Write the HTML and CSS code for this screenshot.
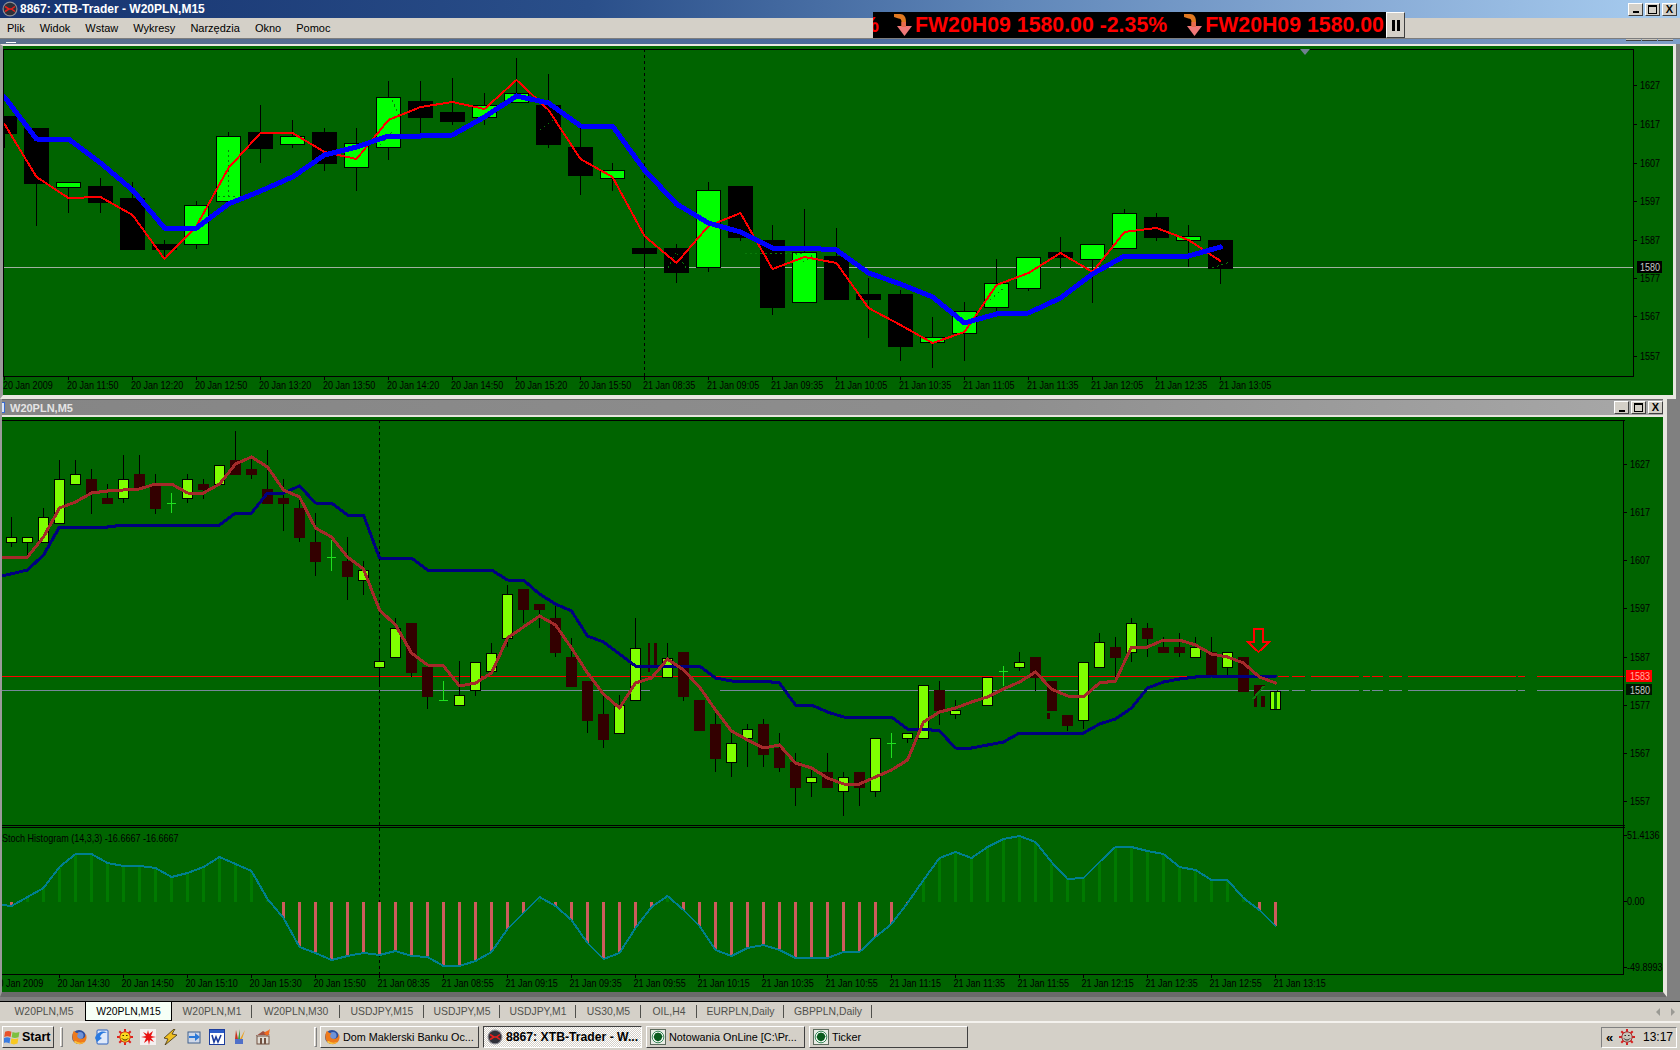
FILE: index.html
```html
<!DOCTYPE html>
<html lang="pl">
<head>
<meta charset="utf-8">
<title>8867: XTB-Trader - W20PLN,M15</title>
<link rel="stylesheet" href="styles.css">
</head>
<body>
<svg class="defs" width="0" height="0" aria-hidden="true">
  <symbol id="i-mt" viewBox="0 0 16 16">
    <circle cx="8" cy="8" r="7.5" fill="#8e8e96"/>
    <circle cx="8" cy="8" r="6.3" fill="#2f3038"/>
    <path d="M3 5.5 7 8 3 10.5M13 5.5 9.5 8 13 10.5M6 8h4" fill="none" stroke="#e8201c" stroke-width="1.5"/>
  </symbol>
  <symbol id="i-ff" viewBox="0 0 16 16">
    <circle cx="8" cy="8" r="7" fill="#2c4f9e"/>
    <circle cx="9" cy="6.5" r="3.5" fill="#6f93d8"/>
    <path d="M3 1.5C1 5 .5 10 3.5 13c3 3 8 2.8 10.5-.2 2-2.5 2-5.8.6-8.3.1 2.5-1 4.3-2.6 5-2 1-4.6.4-5.6-1.5C5.900 6.700 6.600 5 7.500 4.200 5.400 4.300 4.300 3.500 3 1.500Z" fill="#ee7a1c"/>
    <path d="M3 13c3 2.800 8 2.700 10.800-.2-2.300 1-6.300 1.300-8.300-.3-1-.8-2.200-.2-2.500.5Z" fill="#f8c23c"/>
  </symbol>
  <symbol id="i-green" viewBox="0 0 16 16">
    <rect x=".5" y=".5" width="15" height="15" fill="#e8ece4" stroke="#5c6a5c"/>
    <circle cx="8" cy="8" r="5.800" fill="#fff" stroke="#3a8a5a"/>
    <path d="M5 4.500 8 3.500l3 1 1.500 3-1.500 3.500-3 1.500-3-1.500L3.500 8Z" fill="#0a5c1e"/>
  </symbol>
  <symbol id="i-sun" viewBox="0 0 16 16">
    <path d="M8 0v16M0 8h16M2.300 2.300l11.400 11.400M13.700 2.300 2.300 13.700" stroke="#e02020" stroke-width="2"/>
    <circle cx="8" cy="8" r="5.200" fill="#f8d820" stroke="#d04010"/>
    <path d="M5.500 6.500h1.400M9.100 6.500h1.400" stroke="#302000" stroke-width="1.200"/>
    <path d="M5 9.500c1.500 2 4.500 2 6 0" fill="none" stroke="#302000"/>
  </symbol>
  <symbol id="i-sun-gray" viewBox="0 0 16 16">
    <path d="M8 0v16M0 8h16M2.300 2.300l11.400 11.400M13.700 2.300 2.300 13.700" stroke="#d82020" stroke-width="2"/>
    <circle cx="8" cy="8" r="5.200" fill="#c8c4b8" stroke="#a03030"/>
    <path d="M5.500 6.500h1.400M9.100 6.500h1.400" stroke="#202020" stroke-width="1.200"/>
    <path d="M5 9.500c1.500 2 4.500 2 6 0" fill="none" stroke="#202020"/>
  </symbol>
  <symbol id="i-arrow" viewBox="0 0 19 24">
    <path d="M1 1h6c4 0 6 3 6 8v4H8.500V9c0-2.500-1-3.500-3-3.500L1 4Z" fill="#e07820"/>
    <path d="M4 13h15l-7.500 10Z" fill="#f07878"/>
    <path d="M8.500 9h4.500v5H8.500Z" fill="#e86a4a"/>
  </symbol>
</svg>

<header class="titlebar">
  <svg class="icon16"><use href="#i-mt"/></svg>
  <span class="title-text">8867: XTB-Trader - W20PLN,M15</span>
  <div class="winbtns">
    <button class="winbtn"><span class="g-min"></span></button>
    <button class="winbtn"><span class="g-max"></span></button>
    <button class="winbtn"><span class="g-close">X</span></button>
  </div>
</header>
<nav class="menubar">
  <span>Plik</span><span>Widok</span><span>Wstaw</span><span>Wykresy</span><span>Narzędzia</span><span>Okno</span><span>Pomoc</span>
</nav>

<div class="ticker-wrap">
  <div class="ticker">
    <span class="tick-clip">%</span>
    <svg class="tick-arrow tick-arrow-first"><use href="#i-arrow"/></svg>
    <span class="tick-item">FW20H09 1580.00 -2.35%</span>
    <svg class="tick-arrow"><use href="#i-arrow"/></svg>
    <span class="tick-item">FW20H09 1580.00</span>
  </div>
  <div class="pause"><i></i><i></i></div>
</div>

<main class="mdi">
  <div class="hidden-title">
    <span class="hidden-icon"></span>
    <span class="hidden-btn"></span><span class="hidden-btn"></span><span class="hidden-btn"></span>
  </div>
  <section class="win win-top">
    <svg id="chart-top" class="chart chart-top" viewBox="3 46 1670 349"></svg>
  </section>
  <section class="win win-bottom">
    <div class="win-title">
      <span class="win-title-icon"></span>
      <span class="win-title-text">W20PLN,M5</span>
      <div class="winbtns winbtns-small">
        <button class="winbtn"><span class="g-min"></span></button>
        <button class="winbtn"><span class="g-max"></span></button>
        <button class="winbtn"><span class="g-close">X</span></button>
      </div>
    </div>
    <svg id="chart-bottom" class="chart chart-bottom" viewBox="2 417 1661 575"></svg>
  </section>
</main>

<div class="tabs">
  <span class="tab">W20PLN,M5</span>
  <span class="tab tab-active">W20PLN,M15</span>
  <span class="tab tab-sep">W20PLN,M1</span>
  <span class="tab tab-sep">W20PLN,M30</span>
  <span class="tab tab-sep">USDJPY,M15</span>
  <span class="tab tab-sep">USDJPY,M5</span>
  <span class="tab tab-sep">USDJPY,M1</span>
  <span class="tab tab-sep">US30,M5</span>
  <span class="tab tab-sep">OIL,H4</span>
  <span class="tab tab-sep">EURPLN,Daily</span>
  <span class="tab tab-sep">GBPPLN,Daily</span>
  <div class="tab-arrows"><i class="arr-left"></i><i class="arr-right"></i></div>
</div>

<footer class="taskbar">
  <button class="start">
    <svg class="flag" viewBox="0 0 16 15"><path d="M1 2.500c2-1 4-1 6 0l-.8 5c-2-1-4-1-6 0Z" fill="#e8522a"/><path d="M8 2.700c2 1 4 1 6.500 0l-.8 5c-2.500 1-4.500 1-6.500 0Z" fill="#7cc040"/><path d="M0 8.500c2-1 4-1 6 0l-.8 5c-2-1-4-1-6 0Z" fill="#3a7ce0"/><path d="M7 8.700c2 1 4 1 6.500 0l-.8 5c-2.500 1-4.500 1-6.500 0Z" fill="#f8c820"/></svg>
    <span>Start</span>
  </button>
  <span class="grip grip-first"></span>
  <div class="quick">
    <svg class="icon16"><use href="#i-ff"/></svg>
    <svg class="icon16" viewBox="0 0 16 16"><rect x="3" y="1" width="11" height="14" rx="1" fill="#dfe9fa" stroke="#2a60c0"/><path d="M1 9c2-6 8-8 12-5-4-1-6 1-7 4l2 1-5 4Z" fill="#2a7ae0"/></svg>
    <svg class="icon16"><use href="#i-sun"/></svg>
    <svg class="icon16" viewBox="0 0 16 16"><rect width="16" height="16" fill="#f4f0f0"/><path d="M8 1l1 4 4-3-2 5 5 1-5 1 3 4-4-2-1 5-1-5-4 3 2-5-5-1 5-1-3-4 4 2Z" fill="#e81010"/></svg>
    <svg class="icon16" viewBox="0 0 16 16"><path d="M11 0 1 9l4 1-3 6 12-10-5-1 3-5Z" fill="#f0c020" stroke="#403010" stroke-width=".8"/></svg>
    <svg class="icon16" viewBox="0 0 16 16"><rect x="2" y="3" width="12" height="11" fill="#cfd8e8" stroke="#40608c"/><path d="M3 7h6V4l5 4-5 4V9H3Z" fill="#2a78d8"/></svg>
    <svg class="icon16" viewBox="0 0 16 16"><rect x=".5" y=".5" width="15" height="15" fill="#fff" stroke="#1c3c9c"/><rect x="1" y="1" width="14" height="3" fill="#2c5cc8"/><path d="M3 6l2 7 2-5 2 5 3-7" fill="none" stroke="#1c3c9c" stroke-width="1.600"/></svg>
    <svg class="icon16" viewBox="0 0 16 16"><path d="M4 1l2 9H3Z" fill="#c83020"/><path d="M8 0v10H6Z" fill="#40a040"/><path d="M13 1l-3 9H8Z" fill="#e8a020"/><rect x="3" y="10" width="8" height="5" fill="#5070c8"/></svg>
    <svg class="icon16" viewBox="0 0 16 16"><path d="M1 7l7-5 7 4H1Z" fill="#a05040"/><path d="M9 4c2-2 4-2 6-4-1 3 0 5-3 7Z" fill="#f06a20"/><rect x="2" y="7" width="12" height="8" fill="#e0dcd4" stroke="#705040"/><rect x="5" y="9" width="2" height="6" fill="#705040"/><rect x="9" y="9" width="2" height="6" fill="#705040"/></svg>
  </div>
  <span class="grip grip-second"></span>
  <div class="tasks">
    <button class="task"><svg class="icon16"><use href="#i-ff"/></svg><span class="task-text">Dom Maklerski Banku Oc...</span></button>
    <button class="task task-active"><svg class="icon16"><use href="#i-mt"/></svg><span class="task-text">8867: XTB-Trader - W...</span></button>
    <button class="task"><svg class="icon16"><use href="#i-green"/></svg><span class="task-text">Notowania OnLine [C:\Pr...</span></button>
    <button class="task"><svg class="icon16"><use href="#i-green"/></svg><span class="task-text">Ticker</span></button>
  </div>
  <div class="tray">
    <span class="tray-more">«</span>
    <svg class="icon16"><use href="#i-sun-gray"/></svg>
    <span class="clock">13:17</span>
  </div>
</footer>
<script src="chart.js"></script>
</body>
</html>
```
FILE: styles.css
```css
* { box-sizing: border-box; }
html, body { margin: 0; padding: 0; }
body {
  width: 1680px;
  height: 1050px;
  overflow: hidden;
  display: flex;
  flex-direction: column;
  position: relative;
  background: #d4d0c8;
  font-family: "Liberation Sans", Arial, sans-serif;
  font-size: 11px;
  color: #000;
}
.defs { position: absolute; }
.icon16 { width: 16px; height: 16px; flex: none; display: block; }

/* title bar */
.titlebar {
  height: 18px;
  flex: none;
  display: flex;
  align-items: center;
  padding-left: 2px;
  background: linear-gradient(90deg, #16336f 0%, #2a4f8a 35%, #5f86b8 60%, #86a9d4 80%, #a8cdf0 100%);
}
.title-text {
  margin-left: 2px;
  color: #fff;
  font-weight: 700;
  font-size: 12px;
  white-space: nowrap;
}
.winbtns { margin-left: auto; display: flex; gap: 2px; padding-right: 3px; }
.winbtn {
  width: 15px;
  height: 13px;
  padding: 0;
  background: #d4d0c8;
  border: 1px solid;
  border-color: #fff #404040 #404040 #fff;
  display: flex;
  align-items: center;
  justify-content: center;
}
.g-min { width: 6px; height: 2px; background: #000; margin-top: 6px; }
.g-max { width: 9px; height: 9px; border: 1px solid #000; border-top-width: 2px; }
.g-close { font: 700 11px/1 "Liberation Sans", sans-serif; color: #000; }

/* menu */
.menubar {
  height: 21px;
  flex: none;
  display: flex;
  align-items: center;
  gap: 15px;
  padding-left: 7px;
  padding-bottom: 1px;
  background: #d4d0c8;
  border-bottom: 1px solid #7d7d7d;
  font-size: 11px;
}

/* ticker overlay */
.ticker-wrap {
  position: absolute;
  left: 873px;
  top: 12px;
  height: 26px;
  display: flex;
}
.ticker {
  width: 513px;
  height: 26px;
  background: #000;
  overflow: hidden;
  display: flex;
  align-items: center;
  white-space: nowrap;
  color: #f00;
  font-weight: 700;
  font-size: 21.3px;
}
.tick-clip { width: 6px; overflow: hidden; direction: rtl; flex: none; }
.tick-arrow { width: 19px; height: 24px; flex: none; margin-left: 16px; margin-right: 3px; }
.tick-arrow-first { margin-left: 14px; }
.tick-item { flex: none; }
.pause {
  width: 19px;
  height: 26px;
  background: #d4d0c8;
  border: 1px solid;
  border-color: #fff #404040 #404040 #fff;
  display: flex;
  align-items: center;
  justify-content: center;
  gap: 2px;
}
.pause i { width: 3px; height: 11px; background: #000; display: block; }

/* MDI */
.mdi {
  flex: 1;
  min-height: 0;
  background: #808080;
}
.hidden-title {
  height: 5px;
  display: flex;
  align-items: flex-start;
  gap: 1px;
  padding-right: 7px;
  background: linear-gradient(90deg, #5b6f8c 0%, #4a6a9c 50%, #7f9fc8 100%);
}
.hidden-icon { width: 10px; height: 1px; margin: 3px auto 0 6px; background: #fff; }
.hidden-btn { width: 15px; height: 2px; background: #c8c4bc; border-bottom: 1px solid #404040; }
.win { display: block; }
.win-top {
  width: 1676px;
  height: 355px;
  border-top: 2px solid #e8e6e0;
  border-left: 3px solid #9a9a9a;
  border-right: 3px solid #e8e6e0;
  border-bottom: 4px solid #e8e6e0;
  box-shadow: inset 0 -1px 0 #5a5a5a;
}
.chart { display: block; background: #006400; }
.chart-top { width: 1670px; height: 349px; }
.win-bottom {
  width: 1667px;
  height: 598px;
  border-left: 2px solid #9a9a9a;
  border-right: 4px solid #e8e6e0;
  border-bottom: 5px solid #6a6a6a;
}
.chart-bottom { width: 1661px; height: 575px; border-bottom: 0; }
.win-title {
  height: 18px;
  display: flex;
  align-items: center;
  background: linear-gradient(90deg, #858585 0%, #8e8e8e 60%, #a8a8a8 100%);
  border-bottom: 2px solid #e8e6e0;
  border-top: 1px solid #6a6a6a;
}
.win-title-icon { width: 3px; height: 11px; background: #d8e4f8; border: 1px solid #3a6ad0; border-left: 0; flex: none; }
.win-title-text { margin-left: 5px; color: #e4e4e4; font-weight: 700; font-size: 11px; }
.winbtns-small { padding-right: 0; }

/* tabs */
.tabs {
  height: 22px;
  flex: none;
  display: grid;
  grid-template-columns: 82px 87px 80px 88px 84px 76px 76px 65px 56px 87px 88px 1fr;
  padding-left: 3px;
  background: #d4d0c8;
  border-top: 1px solid #000;
  border-bottom: 2px solid #f4f2ee;
  color: #50504c;
  font-size: 10.4px;
}
.tab { display: flex; align-items: center; justify-content: center; position: relative; height: 19px; }
.tab-sep::after {
  content: "";
  position: absolute;
  right: 0;
  top: 3px;
  height: 13px;
  width: 1px;
  background: #50504c;
}
.tab-active {
  background: #f6fff6;
  color: #000;
  border: 1px solid #000;
  border-top: 0;
  height: 19px;
}
.tab-arrows { display: flex; justify-content: flex-end; align-items: center; gap: 11px; padding-right: 5px; height: 19px; }
.arr-left, .arr-right { width: 0; height: 0; border-top: 4px solid transparent; border-bottom: 4px solid transparent; display: block; }
.arr-left { border-right: 4px solid #9a9a94; }
.arr-right { border-left: 4px solid #9a9a94; }

/* taskbar */
.taskbar {
  height: 27px;
  flex: none;
  display: flex;
  align-items: center;
  padding: 1px 3px 0 2px;
  background: #d4d0c8;
}
.start {
  width: 52px;
  height: 22px;
  padding: 0 0 0 1px;
  flex: none;
  display: flex;
  align-items: center;
  gap: 1px;
  background: #d4d0c8;
  border: 1px solid;
  border-color: #fff #404040 #404040 #fff;
  font: 700 12.5px "Liberation Sans", sans-serif;
  color: #000;
}
.flag { width: 17px; height: 16px; flex: none; }
.grip { width: 3px; height: 20px; flex: none; border: 1px solid; border-color: #fff #808080 #808080 #fff; }
.grip-first { margin-left: 6px; }
.quick { display: flex; gap: 7px; margin-left: 8px; }
.grip-second { margin-left: 43px; }
.tasks { display: flex; gap: 4px; margin-left: 3px; }
.task {
  width: 159px;
  height: 22px;
  padding: 0 0 0 3px;
  flex: none;
  display: flex;
  align-items: center;
  gap: 3px;
  background: #d4d0c8;
  border: 1px solid;
  border-color: #fff #404040 #404040 #fff;
  font: 10.8px "Liberation Sans", sans-serif;
  color: #000;
}
.task-text { white-space: nowrap; }
.task-active {
  border-color: #404040 #fff #fff #404040;
  font-weight: 700;
  font-size: 12.2px;
  background: repeating-conic-gradient(#fff 0 25%, #d4d0c8 0 50%) 0 0 / 2px 2px;
}
.tray {
  margin-left: auto;
  width: 76px;
  height: 21px;
  display: flex;
  align-items: center;
  padding-left: 4px;
  border: 1px solid;
  border-color: #808080 #fff #fff #808080;
  font-size: 11px;
}
.tray-more { font-weight: 700; font-size: 13px; width: 13px; flex: none; line-height: 1; }
.clock { margin-left: 8px; font-size: 12px; }

/* chart drawing, classes used by chart.js */
.crisp { shape-rendering: crispEdges; }
.axis-text { font-family: "Liberation Sans", sans-serif; font-size: 11.5px; fill: #000; }
.label-light { fill: #c4ccc4; }
.label-red { fill: #ffb0a0; }
.line { fill: none; stroke-linejoin: round; stroke-linecap: round; shape-rendering: crispEdges; }
.line-blue { stroke: #0000ff; stroke-width: 5; }
.line-red { stroke: #ff0000; stroke-width: 2; }
.line-navy { stroke: #000080; stroke-width: 3; }
.line-brown { stroke: #a52a2a; stroke-width: 3; }
.line-teal { stroke: #007f8f; stroke-width: 2; }
.frame { stroke: #000; stroke-width: 1; shape-rendering: crispEdges; }
.vline { stroke: #000; stroke-width: 1; stroke-dasharray: 3 3; shape-rendering: crispEdges; }
.hline-top { stroke: #9fb09f; }
.hline-gray { stroke: #778899; }
.hline-red { stroke: #ff0000; }
.marker { fill: #708090; }
.arrow-outline { fill: none; stroke: #ff0000; stroke-width: 2; shape-rendering: crispEdges; }
.scratch { fill: none; stroke: #0a7a0a; stroke-width: 1; stroke-dasharray: 2 3; shape-rendering: crispEdges; }
```
FILE: chart.js
```javascript
(function () {
  var NS = 'http://www.w3.org/2000/svg';
  var NARROW = 0.785;
  function el(parent, tag, attrs, text) {
    var n = document.createElementNS(NS, tag);
    for (var k in attrs) n.setAttribute(k, attrs[k]);
    if (text !== undefined) n.textContent = text;
    parent.appendChild(n);
    return n;
  }
  function rect(p, x, y, w, h, fill) {
    return el(p, 'rect', { x: x, y: y, width: w, height: h, fill: fill, class: 'crisp' });
  }
  function hline(p, x1, x2, y, cls) {
    el(p, 'line', { x1: x1, x2: x2, y1: y + 0.5, y2: y + 0.5, class: 'frame ' + (cls || '') });
  }
  function vline(p, x, y1, y2, cls) {
    el(p, 'line', { x1: x + 0.5, x2: x + 0.5, y1: y1, y2: y2, class: cls || 'frame' });
  }
  /* the chart font is a narrow bitmap face: squeeze the text to its width */
  function text(p, x, y, s, cls) {
    var t = el(p, 'text', { x: x, y: y, class: 'axis-text ' + (cls || '') }, s);
    var w = t.getComputedTextLength();
    t.setAttribute('textLength', (w * NARROW).toFixed(1));
    t.setAttribute('lengthAdjust', 'spacingAndGlyphs');
  }
  function poly(p, pts, cls) {
    el(p, 'polyline', { points: pts.join(' '), class: 'line ' + cls });
  }
  function scratch(p, pts) {
    el(p, 'polyline', { points: pts, class: 'scratch' });
  }
  function candles(p, data, x0, step, half, up, down) {
    data.forEach(function (c, i) {
      if (!c) return;
      var x = Math.floor(x0 + step * i), kind = c[0], top = c[1], bot = c[2];
      if (kind === 'x') {
        rect(p, x, top, 1, bot - top, '#1fe01f');
        rect(p, x - half + 1, c[3], 2 * half - 1, 1, '#1fe01f');
        return;
      }
      rect(p, x, c[3], 1, c[4] - c[3], '#000');
      if (kind === 'u') {
        rect(p, x - half, top, 2 * half + 1, bot - top + 1, '#000');
        rect(p, x - half + 1, top + 1, 2 * half - 1, bot - top - 1, up);
      } else {
        rect(p, x - half, top, 2 * half + 1, bot - top + 1, down);
      }
    });
  }
  function series(x0, step, ys) {
    return ys.map(function (y, i) { return (x0 + step * i) + ',' + y; });
  }

  /* top chart: W20PLN,M15 */
  var top = document.getElementById('chart-top');
  var x1 = 4.5;
  hline(top, 3, 1634, 267, 'hline-top');
  vline(top, 644, 49, 376, 'vline');
  candles(top, [
    ['d',116,133,116,148],['d',128,183,128,226],['u',182,187,182,213],['d',186,202,178,213],
    ['d',198,249,182,249],['d',244,249,240,260],['u',205,244,201,249],['u',136,201,132,201],
    ['d',132,148,105,163],['u',136,144,120,148],['d',132,163,128,171],['u',143,167,128,191],
    ['u',97,147,81,160],['d',101,117,81,133],['d',112,121,78,125],['u',105,117,93,125],
    ['u',93,102,58,102],['d',105,144,74,148],['d',147,175,125,195],['u',170,178,163,191],
    ['d',248,253,210,267],['d',248,272,244,283],['u',190,267,182,272],['d',186,237,186,241],
    ['d',240,307,225,315],['u',252,302,209,302],['d',256,299,228,299],['d',294,299,278,338],
    ['d',294,346,290,361],['u',337,342,317,368],['u',311,333,302,361],['u',283,307,259,311],
    ['u',257,288,257,291],['d',252,257,237,268],['u',244,259,244,303],['u',213,248,209,248],
    ['d',217,237,213,241],['u',236,240,225,267],['d',240,268,240,284]
  ], x1, 32, 12, '#00ff00', '#000');
  /* leftovers of the redrawn chart on some bars */
  scratch(top, '228,150 228,198');
  scratch(top, '218,196 238,196');
  scratch(top, '392,100 400,118');
  scratch(top, '380,145 392,132');
  scratch(top, '540,130 556,118');
  scratch(top, '668,268 676,252 686,268');
  scratch(top, '745,253 804,253');
  scratch(top, '796,254 804,262 814,254');
  scratch(top, '990,300 1004,288');
  scratch(top, '1212,268 1230,262');
  poly(top, series(x1, 32, [124,177,198,197,215,259,226,168,133,133,152,159,120,107,102,109,80,110,159,177,236,263,226,213,269,257,263,308,325,343,332,285,273,253,272,232,228,240,261]), 'line-red');
  poly(top, series(x1, 32, [97,139,139,163,190,228,228,204,191,177,155,147,136,136,135,117,96,103,126,126,170,204,223,232,248,248,250,273,284,297,323,314,313,298,274,256,256,256,247]), 'line-blue');
  hline(top, 3, 1634, 49);
  hline(top, 3, 1634, 376);
  vline(top, 3, 49, 376);
  vline(top, 1633, 49, 377);
  el(top, 'polygon', { points: '1300,49 1310,49 1305,55', class: 'marker' });
  [[85,'1627'],[124,'1617'],[163,'1607'],[201,'1597'],[240,'1587'],[278,'1577'],[316,'1567'],[356,'1557']].forEach(function (t) {
    hline(top, 1634, 1637, t[0]);
    text(top, 1640, t[0] + 4, t[1]);
  });
  rect(top, 1637, 261, 25, 12, '#000');
  text(top, 1640, 271, '1580', 'label-light');
  ['20 Jan 2009','20 Jan 11:50','20 Jan 12:20','20 Jan 12:50','20 Jan 13:20','20 Jan 13:50','20 Jan 14:20','20 Jan 14:50','20 Jan 15:20','20 Jan 15:50','21 Jan 08:35','21 Jan 09:05','21 Jan 09:35','21 Jan 10:05','21 Jan 10:35','21 Jan 11:05','21 Jan 11:35','21 Jan 12:05','21 Jan 12:35','21 Jan 13:05'].forEach(function (s, k) {
    vline(top, 4 + 64 * k, 376, 380);
    text(top, 3 + 64 * k, 389, s);
  });

  /* bottom chart: W20PLN,M5 with Stoch Histogram */
  var bot = document.getElementById('chart-bottom');
  var x2 = 11.5;
  hline(bot, 2, 1625, 420);
  [[2,650],[720,1277],[1278,1289],[1292,1305],[1311,1359],[1363,1370],[1372,1383],[1389,1402],[1408,1516],[1518,1525],[1537,1624]].forEach(function (s) {
    hline(bot, s[0], s[1], 690, 'hline-gray');
  });
  [[2,1277],[1278,1289],[1292,1305],[1311,1359],[1363,1370],[1372,1383],[1389,1402],[1408,1516],[1518,1525],[1537,1625]].forEach(function (s) {
    hline(bot, s[0], s[1], 676, 'hline-red');
  });
  vline(bot, 379, 420, 974, 'vline');
  candles(bot, [
    ['u',537,542,517,547],['u',537,542,537,557],['u',517,542,508,542],['u',479,523,460,523],
    ['u',474,484,460,484],['d',479,493,469,514],['d',498,503,484,503],['u',479,498,455,503],
    ['d',474,488,455,488],['d',484,508,474,514],['x',493,513,503],['u',479,498,474,503],
    ['d',484,489,479,499],['u',465,484,465,484],['d',460,474,431,474],['d',469,474,455,479],
    ['d',489,503,450,503],['d',498,503,479,531],['d',508,537,500,542],['d',542,561,513,576],
    ['x',540,571,557],['d',561,576,537,600],['u',570,580,561,595],['u',661,667,650,687],
    ['u',628,657,618,657],['d',623,672,623,677],['d',667,696,667,709],['x',681,700,700],
    ['u',695,705,661,705],['u',662,690,662,696],['u',653,671,643,671],['u',594,638,585,647],
    ['d',589,609,589,623],['d',604,609,604,628],['d',618,652,605,657],['d',657,686,638,686],
    ['d',681,720,681,733],['d',714,739,696,748],['u',705,733,695,733],['u',648,700,618,700],
    null,['u',658,677,643,677],['d',652,696,652,701],['d',700,730,700,730],
    ['d',724,758,710,772],['u',743,762,733,777],['u',729,738,724,767],['d',724,754,719,767],
    ['d',748,767,733,772],['d',762,787,753,806],['u',777,782,767,797],['d',772,787,753,787],
    ['u',777,791,772,816],['d',772,787,772,806],['u',738,791,738,797],['x',733,758,743],
    ['u',733,738,733,743],['u',685,738,685,738],['d',690,710,681,725],['u',710,714,700,719],
    null,['u',677,705,677,705],['x',666,686,671],['u',662,667,652,671],['d',657,677,657,691],
    null,['d',715,725,715,731],['u',662,720,662,729],['u',642,667,633,667],['d',647,657,637,677],
    ['u',623,652,618,662],['d',628,638,623,657],['d',647,652,637,652],['d',647,652,633,657],
    ['u',647,657,637,657],['d',652,676,637,676],['u',652,667,652,676],['d',657,691,657,691]
  ], x2, 16, 5, '#7fff00', '#330000');
  /* partly redrawn bars at the live edge */
  rect(bot, 648, 643, 2, 29, '#330000');
  rect(bot, 654, 643, 3, 22, '#330000');
  rect(bot, 1047, 681, 10, 30, '#330000');
  rect(bot, 1047, 713, 3, 6, '#330000');
  rect(bot, 1254, 696, 3, 11, '#330000');
  rect(bot, 1261, 696, 4, 11, '#330000');
  el(bot, 'polygon', { points: '1254,685 1265,685 1254,698', fill: '#330000', class: 'crisp' });
  el(bot, 'line', { x1: 1253, y1: 699, x2: 1264, y2: 686, stroke: '#0c7a0c', 'stroke-width': 2, class: 'crisp' });
  rect(bot, 1270, 691, 11, 19, '#000');
  rect(bot, 1271, 692, 3, 17, '#7fff00');
  rect(bot, 1277, 692, 3, 17, '#7fff00');
  rect(bot, 1274, 692, 3, 17, '#006400');
  poly(bot, ['2,576'].concat(series(x2 + 16, 16, [570,555,527,527,527,527,525,525,525,525,525,525,525,513,513,493,493,486,503,503,515,515,558,558,558,570,570,570,570,570,580,580,594,604,611,636,642,654,666,666,666,666,666,678,681,681,681,683,705,705,712,717,717,717,717,729,729,731,748,748,745,742,733,733,733,733,733,724,719,708,688,682,679,677,676,676,676,676,676])), 'line-navy');
  poly(bot, ['2,557'].concat(series(x2 + 16, 16, [557,537,508,502,493,491,490,489,484,484,493,493,484,464,457,467,490,497,528,537,557,569,610,625,653,665,666,686,683,673,638,627,616,625,648,673,694,708,683,678,659,670,687,710,731,740,748,745,763,768,778,784,784,777,770,760,722,712,708,702,697,689,682,672,689,696,697,683,681,647,647,640,640,645,654,657,663,677,683])), 'line-brown');
  el(bot, 'polygon', { points: '1254,629 1263,629 1263,642 1269,642 1258.500,652 1248,642 1254,642', class: 'arrow-outline' });

  var stoch = [906,897,888,867,854,854,863,866,866,868,877,873,867,857,864,871,899,918,947,953,960,956,953,955,951,956,957,966,966,961,952,929,913,897,906,920,943,959,953,928,907,896,910,926,950,956,948,945,950,958,958,958,952,952,937,924,903,880,858,852,858,847,839,836,842,862,879,878,862,847,847,851,854,867,870,880,880,898,910,926];
  stoch.forEach(function (y, i) {
    var x = Math.floor(x2 + 16 * i) - 1;
    if (y > 902) rect(bot, x, 902, 3, y - 902, '#cd5c5c');
    else rect(bot, x, y, 3, 902 - y, '#007a00');
  });
  poly(bot, ['2,905'].concat(series(x2, 16, stoch)), 'line-teal');
  hline(bot, 2, 1625, 825);
  hline(bot, 2, 1625, 827);
  hline(bot, 2, 1624, 974);
  vline(bot, 1623, 420, 975);
  text(bot, 2, 842, 'Stoch Histogram (14,3,3) -16.6667 -16.6667');
  [[464,'1627'],[512,'1617'],[560,'1607'],[608,'1597'],[657,'1587'],[705,'1577'],[753,'1567'],[801,'1557']].forEach(function (t) {
    hline(bot, 1624, 1627, t[0]);
    text(bot, 1630, t[0] + 4, t[1]);
  });
  rect(bot, 1626, 670, 26, 12, '#ff0000');
  text(bot, 1630, 680, '1583', 'label-red');
  rect(bot, 1626, 684, 26, 11, '#001400');
  text(bot, 1630, 694, '1580', 'label-light');
  [[835,'51.4136'],[901,'0.00'],[967,'-49.8993']].forEach(function (t) {
    hline(bot, 1624, 1627, t[0]);
    text(bot, 1627, t[0] + 4, t[1]);
  });
  ['20 Jan 14:30','20 Jan 14:50','20 Jan 15:10','20 Jan 15:30','20 Jan 15:50','21 Jan 08:35','21 Jan 08:55','21 Jan 09:15','21 Jan 09:35','21 Jan 09:55','21 Jan 10:15','21 Jan 10:35','21 Jan 10:55','21 Jan 11:15','21 Jan 11:35','21 Jan 11:55','21 Jan 12:15','21 Jan 12:35','21 Jan 12:55','21 Jan 13:15'].forEach(function (s, k) {
    vline(bot, 59 + 64 * k, 974, 978);
    text(bot, 57.5 + 64 * k, 987, s);
  });
  text(bot, -6.5, 987, '20 Jan 2009');
})();
```
